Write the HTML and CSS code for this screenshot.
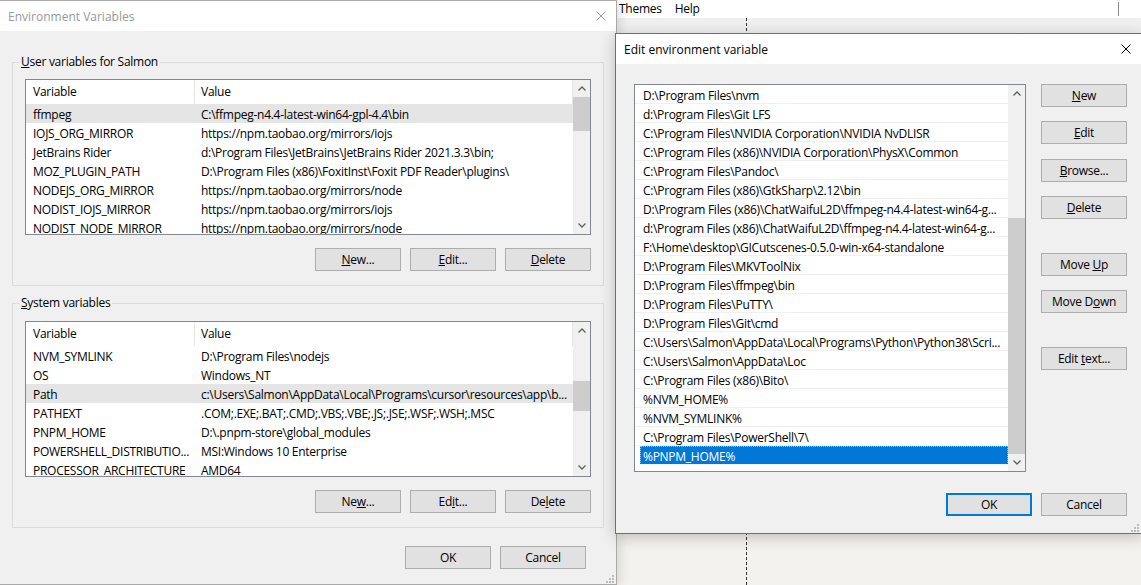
FILE: index.html
```html
<!DOCTYPE html>
<html lang="en">
<head>
<meta charset="utf-8">
<title>Environment Variables</title>
<link rel="stylesheet" href="styles.css">
</head>
<body>
<div class="desktop">
  <div class="app">
    <div class="menubar"><span class="menu-item">Themes</span><span class="menu-item">Help</span><i class="caret"></i></div>
    <div class="work"><div class="guide"></div></div>
  </div>

  <div class="win win-env">
    <div class="titlebar inactive">
      <span class="title">Environment Variables</span>
      <svg class="close" width="10" height="10" viewBox="0 0 10 10"><path d="M0.5 0.5L9.5 9.5M9.5 0.5L0.5 9.5" stroke="currentColor" stroke-width="1" fill="none"/></svg>
    </div>
    <div class="body">
      <fieldset class="group">
        <legend><u>U</u>ser variables for Salmon</legend>
        <div class="listview">
          <div class="lv-main">
            <div class="lv-head"><div class="c1">Variable</div><div class="c2">Value</div></div>
            <div class="lv-row sel"><div class="c1">ffmpeg</div><div class="c2">C:\ffmpeg-n4.4-latest-win64-gpl-4.4\bin</div></div>
            <div class="lv-row"><div class="c1">IOJS_ORG_MIRROR</div><div class="c2">https://npm.taobao.org/mirrors/iojs</div></div>
            <div class="lv-row"><div class="c1">JetBrains Rider</div><div class="c2">d:\Program Files\JetBrains\JetBrains Rider 2021.3.3\bin;</div></div>
            <div class="lv-row"><div class="c1">MOZ_PLUGIN_PATH</div><div class="c2">D:\Program Files (x86)\FoxitInst\Foxit PDF Reader\plugins\</div></div>
            <div class="lv-row"><div class="c1">NODEJS_ORG_MIRROR</div><div class="c2">https://npm.taobao.org/mirrors/node</div></div>
            <div class="lv-row"><div class="c1">NODIST_IOJS_MIRROR</div><div class="c2">https://npm.taobao.org/mirrors/iojs</div></div>
            <div class="lv-row"><div class="c1">NODIST_NODE_MIRROR</div><div class="c2">https://npm.taobao.org/mirrors/node</div></div>
          </div>
          <div class="vscroll">
            <div class="sb-btn"><svg width="8" height="5" viewBox="0 0 8 5"><path d="M0.5 4.5L4 1L7.5 4.5" stroke="#606060" stroke-width="1.3" fill="none"/></svg></div>
            <div class="sb-track"><div class="sb-thumb thumb-user"></div></div>
            <div class="sb-btn"><svg width="8" height="5" viewBox="0 0 8 5"><path d="M0.5 0.5L4 4L7.5 0.5" stroke="#606060" stroke-width="1.3" fill="none"/></svg></div>
          </div>
        </div>
        <div class="btnrow">
          <button class="btn"><u>N</u>ew...</button>
          <button class="btn"><u>E</u>dit...</button>
          <button class="btn"><u>D</u>elete</button>
        </div>
      </fieldset>

      <fieldset class="group group-sys">
        <legend><u>S</u>ystem variables</legend>
        <div class="listview">
          <div class="lv-main">
            <div class="lv-head"><div class="c1">Variable</div><div class="c2">Value</div></div>
            <div class="lv-row"><div class="c1">NVM_SYMLINK</div><div class="c2">D:\Program Files\nodejs</div></div>
            <div class="lv-row"><div class="c1">OS</div><div class="c2">Windows_NT</div></div>
            <div class="lv-row sel"><div class="c1">Path</div><div class="c2">c:\Users\Salmon\AppData\Local\Programs\cursor\resources\app\b...</div></div>
            <div class="lv-row"><div class="c1">PATHEXT</div><div class="c2">.COM;.EXE;.BAT;.CMD;.VBS;.VBE;.JS;.JSE;.WSF;.WSH;.MSC</div></div>
            <div class="lv-row"><div class="c1">PNPM_HOME</div><div class="c2">D:\.pnpm-store\global_modules</div></div>
            <div class="lv-row"><div class="c1">POWERSHELL_DISTRIBUTIO...</div><div class="c2">MSI:Windows 10 Enterprise</div></div>
            <div class="lv-row"><div class="c1">PROCESSOR_ARCHITECTURE</div><div class="c2">AMD64</div></div>
          </div>
          <div class="vscroll">
            <div class="sb-btn"><svg width="8" height="5" viewBox="0 0 8 5"><path d="M0.5 4.5L4 1L7.5 4.5" stroke="#606060" stroke-width="1.3" fill="none"/></svg></div>
            <div class="sb-track"><div class="sb-thumb thumb-sys"></div></div>
            <div class="sb-btn"><svg width="8" height="5" viewBox="0 0 8 5"><path d="M0.5 0.5L4 4L7.5 0.5" stroke="#606060" stroke-width="1.3" fill="none"/></svg></div>
          </div>
        </div>
        <div class="btnrow">
          <button class="btn">Ne<u>w</u>...</button>
          <button class="btn">Ed<u>i</u>t...</button>
          <button class="btn">De<u>l</u>ete</button>
        </div>
      </fieldset>

      <div class="dlgbtns">
        <button class="btn">OK</button>
        <button class="btn">Cancel</button>
      </div>
    </div>
    <svg class="grip" width="8" height="8" viewBox="0 0 8 8"><g fill="#bcbcbc"><rect x="6" y="0" width="2" height="2"/><rect x="3" y="3" width="2" height="2"/><rect x="6" y="3" width="2" height="2"/><rect x="0" y="6" width="2" height="2"/><rect x="3" y="6" width="2" height="2"/><rect x="6" y="6" width="2" height="2"/></g></svg>
  </div>

  <div class="win win-edit">
    <div class="titlebar">
      <span class="title">Edit environment variable</span>
      <svg class="close" width="10" height="10" viewBox="0 0 10 10"><path d="M0.5 0.5L9.5 9.5M9.5 0.5L0.5 9.5" stroke="currentColor" stroke-width="1" fill="none"/></svg>
    </div>
    <div class="edit-body">
      <div class="edit-main">
        <div class="pathlist">
          <div class="pl-main">
            <div class="pl-row">D:\Program Files\nvm</div>
            <div class="pl-row">d:\Program Files\Git LFS</div>
            <div class="pl-row">C:\Program Files\NVIDIA Corporation\NVIDIA NvDLISR</div>
            <div class="pl-row">C:\Program Files (x86)\NVIDIA Corporation\PhysX\Common</div>
            <div class="pl-row">C:\Program Files\Pandoc\</div>
            <div class="pl-row">C:\Program Files (x86)\GtkSharp\2.12\bin</div>
            <div class="pl-row">D:\Program Files (x86)\ChatWaifuL2D\ffmpeg-n4.4-latest-win64-g...</div>
            <div class="pl-row">d:\Program Files (x86)\ChatWaifuL2D\ffmpeg-n4.4-latest-win64-g...</div>
            <div class="pl-row">F:\Home\desktop\GICutscenes-0.5.0-win-x64-standalone</div>
            <div class="pl-row">D:\Program Files\MKVToolNix</div>
            <div class="pl-row">D:\Program Files\ffmpeg\bin</div>
            <div class="pl-row">D:\Program Files\PuTTY\</div>
            <div class="pl-row">D:\Program Files\Git\cmd</div>
            <div class="pl-row">C:\Users\Salmon\AppData\Local\Programs\Python\Python38\Scri...</div>
            <div class="pl-row">C:\Users\Salmon\AppData\Loc</div>
            <div class="pl-row">C:\Program Files (x86)\Bito\</div>
            <div class="pl-row">%NVM_HOME%</div>
            <div class="pl-row">%NVM_SYMLINK%</div>
            <div class="pl-row">C:\Program Files\PowerShell\7\</div>
            <div class="pl-row sel">%PNPM_HOME%</div>
          </div>
          <div class="vscroll">
            <div class="sb-btn"><svg width="8" height="5" viewBox="0 0 8 5"><path d="M0.5 4.5L4 1L7.5 4.5" stroke="#606060" stroke-width="1.3" fill="none"/></svg></div>
            <div class="sb-track"><div class="sb-thumb thumb-path"></div></div>
            <div class="sb-btn"><svg width="8" height="5" viewBox="0 0 8 5"><path d="M0.5 0.5L4 4L7.5 0.5" stroke="#606060" stroke-width="1.3" fill="none"/></svg></div>
          </div>
        </div>
        <div class="side-btns">
          <button class="btn"><u>N</u>ew</button>
          <button class="btn"><u>E</u>dit</button>
          <button class="btn b-browse"><u>B</u>rowse...</button>
          <button class="btn"><u>D</u>elete</button>
          <button class="btn b-sep">Move <u>U</u>p</button>
          <button class="btn">Move D<u>o</u>wn</button>
          <button class="btn b-sep">Edit <u>t</u>ext...</button>
        </div>
      </div>
      <div class="edit-foot">
        <button class="btn default">OK</button>
        <button class="btn">Cancel</button>
      </div>
    </div>
    <svg class="grip grip-edit" width="8" height="8" viewBox="0 0 8 8"><g fill="#bcbcbc"><rect x="6" y="0" width="2" height="2"/><rect x="3" y="3" width="2" height="2"/><rect x="6" y="3" width="2" height="2"/><rect x="0" y="6" width="2" height="2"/><rect x="3" y="6" width="2" height="2"/><rect x="6" y="6" width="2" height="2"/></g></svg>
  </div>
</div>
</body>
</html>
```
FILE: styles.css
```css
* { box-sizing: border-box; }
html, body { margin: 0; padding: 0; }
body {
  width: 1141px;
  height: 585px;
  overflow: hidden;
  font-family: "Open Sans", "Noto Sans", sans-serif;
  font-size: 12px;
  letter-spacing: -0.27px;
  color: #000;
}
.desktop {
  position: relative;
  width: 1141px;
  height: 585px;
  overflow: hidden;
  background: #fff;
}

/* background application */
.app { display: flex; flex-direction: column; height: 100%; }
.menubar {
  height: 18px;
  flex: none;
  display: flex;
  align-items: center;
  gap: 13px;
  padding-left: 619px;
  background: #fff;
  line-height: 18px;
}
.menubar .caret {
  margin-left: auto;
  margin-right: 22px;
  width: 1px;
  height: 14px;
  background: #8a8a8a;
}
.work {
  flex: 1;
  display: flex;
  background: linear-gradient(#efefef 0, #f0f0f0 15px, #f3f2ee 15px);
}
.guide {
  margin-left: 746px;
  width: 1px;
  border-left: 1px dashed #333;
}

/* windows */
.win {
  position: absolute;
  background: #f0f0f0;
  display: flex;
  flex-direction: column;
}
.win-env {
  left: -1px;
  top: 0;
  width: 618px;
  height: 585px;
  border: 1px solid #a9a9a9;
  box-shadow: 3px 0 10px rgba(0, 0, 0, 0.12);
}
.win-edit {
  left: 615px;
  top: 33px;
  width: 528px;
  height: 501px;
  border: 1px solid #6f6f6f;
  box-shadow: 0 3px 14px rgba(0, 0, 0, 0.22);
}
.titlebar {
  height: 30px;
  flex: none;
  background: #fff;
  display: flex;
  align-items: center;
  justify-content: space-between;
  padding: 0 10px 0 8px;
  color: #000;
  letter-spacing: 0;
}
.titlebar.inactive { color: #999; }
.win-edit .titlebar { padding-right: 11px; }
.close { display: block; }

.body { flex: 1; padding: 23px 12px 0; }

fieldset.group {
  margin: 0;
  padding: 9px 12px 14px;
  border: 1px solid #dcdcdc;
  min-width: 0;
}
fieldset.group-sys { margin-top: 9px; padding-top: 10px; }
legend {
  padding: 0 2px;
  margin-left: -6px;
  line-height: 16px;
}

.listview {
  display: flex;
  height: 156px;
  border: 1px solid #828790;
  background: #fff;
}
.lv-main { flex: 1; min-width: 0; overflow: hidden; }
.lv-head { display: flex; height: 24px; line-height: 24px; }
.lv-head .c1 { border-right: 1px solid #e5e5e5; }
.lv-head .c2 { border-right: 1px solid #e5e5e5; }
.lv-row { display: flex; height: 19px; line-height: 21px; }
.lv-row.sel { background: #e5e5e5; }
.c1 { width: 169px; flex: none; padding-left: 7px; white-space: nowrap; overflow: hidden; }
.c2 { flex: 1; padding-left: 6px; white-space: nowrap; overflow: hidden; }

.vscroll {
  width: 17px;
  flex: none;
  display: flex;
  flex-direction: column;
  background: #f0f0f0;
}
.sb-btn {
  height: 17px;
  flex: none;
  display: flex;
  align-items: center;
  justify-content: center;
}
.sb-btn svg { display: block; }
.sb-track { flex: 1; display: flex; flex-direction: column; }
.sb-thumb { background: #cdcdcd; flex: none; }
.thumb-user { height: 34px; }
.thumb-sys { margin-top: 42px; height: 30px; }
.thumb-path { margin-top: auto; height: 236px; }

.btn {
  width: 86px;
  height: 23px;
  padding: 0;
  border: 1px solid #adadad;
  background: #e1e1e1;
  font: inherit;
  letter-spacing: inherit;
  color: #000;
  line-height: 21px;
  text-align: center;
}
.btn.default {
  border-color: #0078d7;
  box-shadow: inset 0 0 0 1px #0078d7;
}
.btnrow {
  display: flex;
  justify-content: flex-end;
  gap: 9px;
  margin-top: 13px;
}
.dlgbtns {
  display: flex;
  justify-content: flex-end;
  gap: 9px;
  margin-top: 18px;
  padding-right: 18px;
}
.grip { position: absolute; right: 2px; bottom: 1px; display: block; }
.grip-edit { right: 3px; bottom: 1px; }

/* edit dialog */
.edit-body { flex: 1; padding: 20px 15px 0 18px; }
.edit-main { display: flex; }
.pathlist {
  width: 392px;
  height: 388px;
  flex: none;
  display: flex;
  border: 1px solid #828790;
  background: #fff;
}
.pl-main { flex: 1; min-width: 0; overflow: hidden; }
.pl-row {
  height: 19px;
  line-height: 20px;
  padding-top: 1px;
  border-bottom: 1px solid #f0f0f0;
  padding-left: 8px;
  white-space: nowrap;
  overflow: hidden;
}
.pl-row.sel {
  margin-left: 5px;
  padding-left: 3px;
  background: #0078d7;
  color: #fff;
  outline: 1px dotted rgba(255, 255, 255, 0.55);
  outline-offset: -1px;
}
.side-btns {
  display: flex;
  flex-direction: column;
  width: 86px;
  margin-left: 15px;
  gap: 14px;
}
.side-btns .b-browse { margin-top: 1px; }
.side-btns .b-sep { margin-top: 20px; }
.edit-foot {
  display: flex;
  justify-content: flex-end;
  gap: 9px;
  margin-top: 21px;
}
```
